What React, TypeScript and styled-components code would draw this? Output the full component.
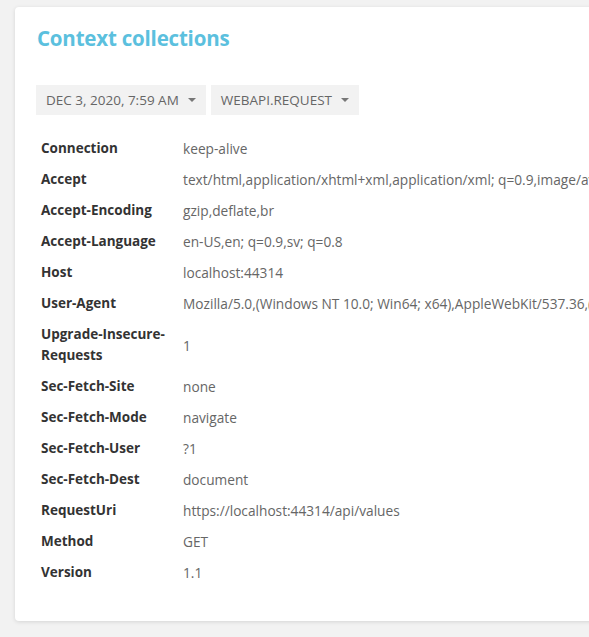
import styled, { createGlobalStyle } from "styled-components";

const GlobalStyle = createGlobalStyle`
  html, body {
    margin: 0;
    background: #f2f2f2;
    overflow: hidden;
  }
  body {
    font-family: "Open Sans", "Noto Sans", sans-serif;
  }
`;

const headers: [string, string][] = [
  ["Connection", "keep-alive"],
  ["Accept", "text/html,application/xhtml+xml,application/xml; q=0.9,image/avif,image/webp,image/apng,*/*; q=0.8,application/signed-exchange; v=b3; q=0.9"],
  ["Accept-Encoding", "gzip,deflate,br"],
  ["Accept-Language", "en-US,en; q=0.9,sv; q=0.8"],
  ["Host", "localhost:44314"],
  ["User-Agent", "Mozilla/5.0,(Windows NT 10.0; Win64; x64),AppleWebKit/537.36,(KHTML, like Gecko),Chrome/87.0.4280.66,Safari/537.36"],
  ["Upgrade-Insecure-Requests", "1"],
  ["Sec-Fetch-Site", "none"],
  ["Sec-Fetch-Mode", "navigate"],
  ["Sec-Fetch-User", "?1"],
  ["Sec-Fetch-Dest", "document"],
  ["RequestUri", "https://localhost:44314/api/values"],
  ["Method", "GET"],
  ["Version", "1.1"],
];

export default function App() {
  return (
    <Page>
      <GlobalStyle />
      <Card>
        <Title>Context collections</Title>
        <Toolbar>
          <DropButton>
            Dec 3, 2020, 7:59 AM <Caret />
          </DropButton>
          <DropButton>
            WebApi.Request <Caret />
          </DropButton>
        </Toolbar>
        <Table>
          <tbody>
            {headers.map(([key, value]) => (
              <tr key={key}>
                <KeyCell>{key}</KeyCell>
                <ValueCell>{value}</ValueCell>
              </tr>
            ))}
          </tbody>
        </Table>
      </Card>
    </Page>
  );
}

const Page = styled.div`
  padding: 7px 0 14px 15px;
  width: 1200px;
`;

const Card = styled.div`
  background: #fff;
  border-radius: 4px;
  box-shadow: 0 1px 4px rgba(0, 0, 0, 0.12);
  padding: 16px 21px 33px 21px;
  min-height: 564px;
`;

const Title = styled.h1`
  margin: 0 0 32px 1px;
  font-size: 20.5px;
  font-weight: 700;
  line-height: 30px;
  color: #5bc0de;
  letter-spacing: -0.2px;
`;

const Toolbar = styled.div`
  display: flex;
  gap: 5px;
  margin-bottom: 18px;
`;

const DropButton = styled.div`
  display: flex;
  align-items: center;
  gap: 9px;
  height: 30px;
  padding: 0 10px;
  background: #f2f2f2;
  color: #666;
  font-size: 13.5px;
  text-transform: uppercase;
  white-space: nowrap;
`;

const Caret = styled.span`
  width: 0;
  height: 0;
  border-left: 4px solid transparent;
  border-right: 4px solid transparent;
  border-top: 4px solid #777;
`;

const Table = styled.table`
  border-collapse: collapse;
  font-size: 13.5px;
  line-height: 21px;
`;

const KeyCell = styled.td`
  width: 132px;
  padding: 5px;
  font-weight: 700;
  color: #333;
  vertical-align: middle;
`;

const ValueCell = styled.td`
  padding: 5px;
  font-size: 13.7px;
  color: #666;
  white-space: nowrap;
  vertical-align: middle;
`;
